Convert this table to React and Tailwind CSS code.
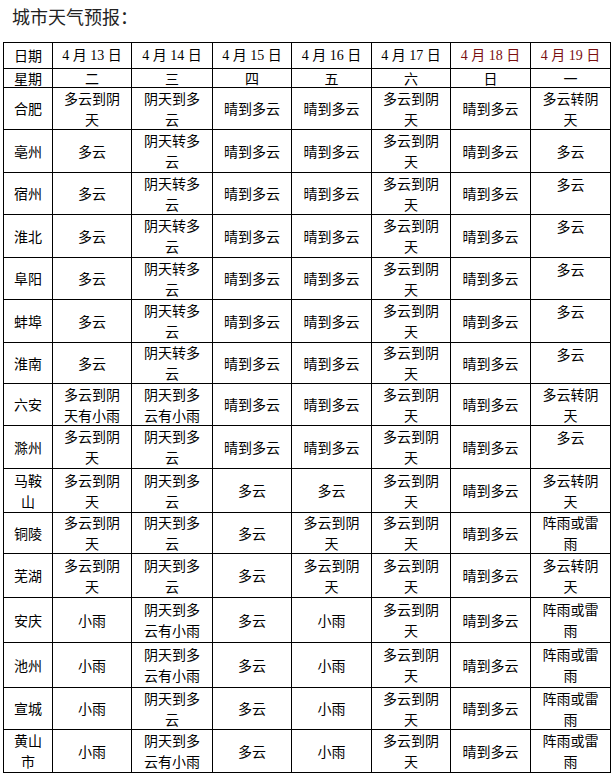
import React from "react";

const dates = [
  { d: "4 月 13 日", w: "二" },
  { d: "4 月 14 日", w: "三" },
  { d: "4 月 15 日", w: "四" },
  { d: "4 月 16 日", w: "五" },
  { d: "4 月 17 日", w: "六" },
  { d: "4 月 18 日", w: "日", red: true },
  { d: "4 月 19 日", w: "一", red: true },
];

// "/" = line break, leading "^" = top aligned cell
const rows = [
  ["合肥", "多云到阴/天", "阴天到多/云", "晴到多云", "晴到多云", "多云到阴/天", "晴到多云", "多云转阴/天"],
  ["亳州", "多云", "阴天转多/云", "晴到多云", "晴到多云", "多云到阴/天", "晴到多云", "多云"],
  ["宿州", "多云", "阴天转多/云", "晴到多云", "晴到多云", "多云到阴/天", "晴到多云", "^多云"],
  ["淮北", "多云", "阴天转多/云", "晴到多云", "晴到多云", "多云到阴/天", "晴到多云", "^多云"],
  ["阜阳", "多云", "阴天转多/云", "晴到多云", "晴到多云", "多云到阴/天", "晴到多云", "^多云"],
  ["蚌埠", "多云", "阴天转多/云", "晴到多云", "晴到多云", "多云到阴/天", "晴到多云", "^多云"],
  ["淮南", "多云", "阴天转多/云", "晴到多云", "晴到多云", "多云到阴/天", "晴到多云", "^多云"],
  ["六安", "多云到阴/天有小雨", "阴天到多/云有小雨", "晴到多云", "晴到多云", "多云到阴/天", "晴到多云", "多云转阴/天"],
  ["滁州", "多云到阴/天", "阴天到多/云", "晴到多云", "晴到多云", "多云到阴/天", "晴到多云", "^多云"],
  ["马鞍/山", "多云到阴/天", "阴天到多/云", "多云", "多云", "多云到阴/天", "晴到多云", "多云转阴/天"],
  ["铜陵", "多云到阴/天", "阴天到多/云", "多云", "多云到阴/天", "多云到阴/天", "晴到多云", "阵雨或雷/雨"],
  ["芜湖", "多云到阴/天", "阴天到多/云", "多云", "多云到阴/天", "多云到阴/天", "晴到多云", "多云转阴/天"],
  ["安庆", "小雨", "阴天到多/云有小雨", "多云", "小雨", "多云到阴/天", "晴到多云", "阵雨或雷/雨"],
  ["池州", "小雨", "阴天到多/云有小雨", "多云", "小雨", "多云到阴/天", "晴到多云", "阵雨或雷/雨"],
  ["宣城", "小雨", "阴天到多/云", "多云", "小雨", "多云到阴/天", "晴到多云", "阵雨或雷/雨"],
  ["黄山/市", "小雨", "阴天到多/云有小雨", "多云", "小雨", "多云到阴/天", "晴到多云", "阵雨或雷/雨"],
];

const cjk = { fontFamily: "'Noto Sans CJK SC', 'Noto Sans', sans-serif" };
const serif = { fontFamily: "'Liberation Serif', 'Noto Sans CJK SC', serif" };

function Cell({ text }) {
  const top = text.startsWith("^");
  const lines = text.replace("^", "").split("/");
  return (
    <div
      className={`bg-white flex flex-col items-center text-center text-[14px] leading-[21px] text-black ${
        top ? "justify-start pt-[1px]" : "justify-center"
      }`}
    >
      {lines.map((l, i) => (
        <span key={i} className="whitespace-nowrap">{l}</span>
      ))}
    </div>
  );
}

export default function App() {
  return (
    <div className="w-[613px] bg-white" style={cjk}>
      <div className="h-[42px] pl-[12px] pt-[5px] text-[18px] leading-[22px] text-[#222]">
        城市天气预报：
      </div>
      <div className="ml-[3px] w-[608px] bg-black p-px grid gap-px grid-cols-[48px_78px_80px_78px_79px_78px_79px_79px] grid-rows-[25px_18px_41px_42px_41px_42px_41px_42px_40px_41px_42px_43px_40px_43px_44px_44px_41px_42px]">
        <div className="bg-white flex items-center justify-center text-[14px]">日期</div>
        {dates.map((x) => (
          <div
            key={x.d}
            className={`bg-white flex items-center justify-center text-[14px] whitespace-pre ${
              x.red ? "text-[#7a1010]" : "text-black"
            }`}
            style={serif}
          >
            {x.d}
          </div>
        ))}
        <div className="bg-white flex items-center justify-center text-[14px] leading-[18px]">星期</div>
        {dates.map((x) => (
          <div key={x.w} className="bg-white flex items-center justify-center text-[14px] leading-[18px]">
            {x.w}
          </div>
        ))}
        {rows.map((r) =>
          r.map((c, i) => <Cell key={r[0] + i} text={c} />)
        )}
      </div>
    </div>
  );
}
